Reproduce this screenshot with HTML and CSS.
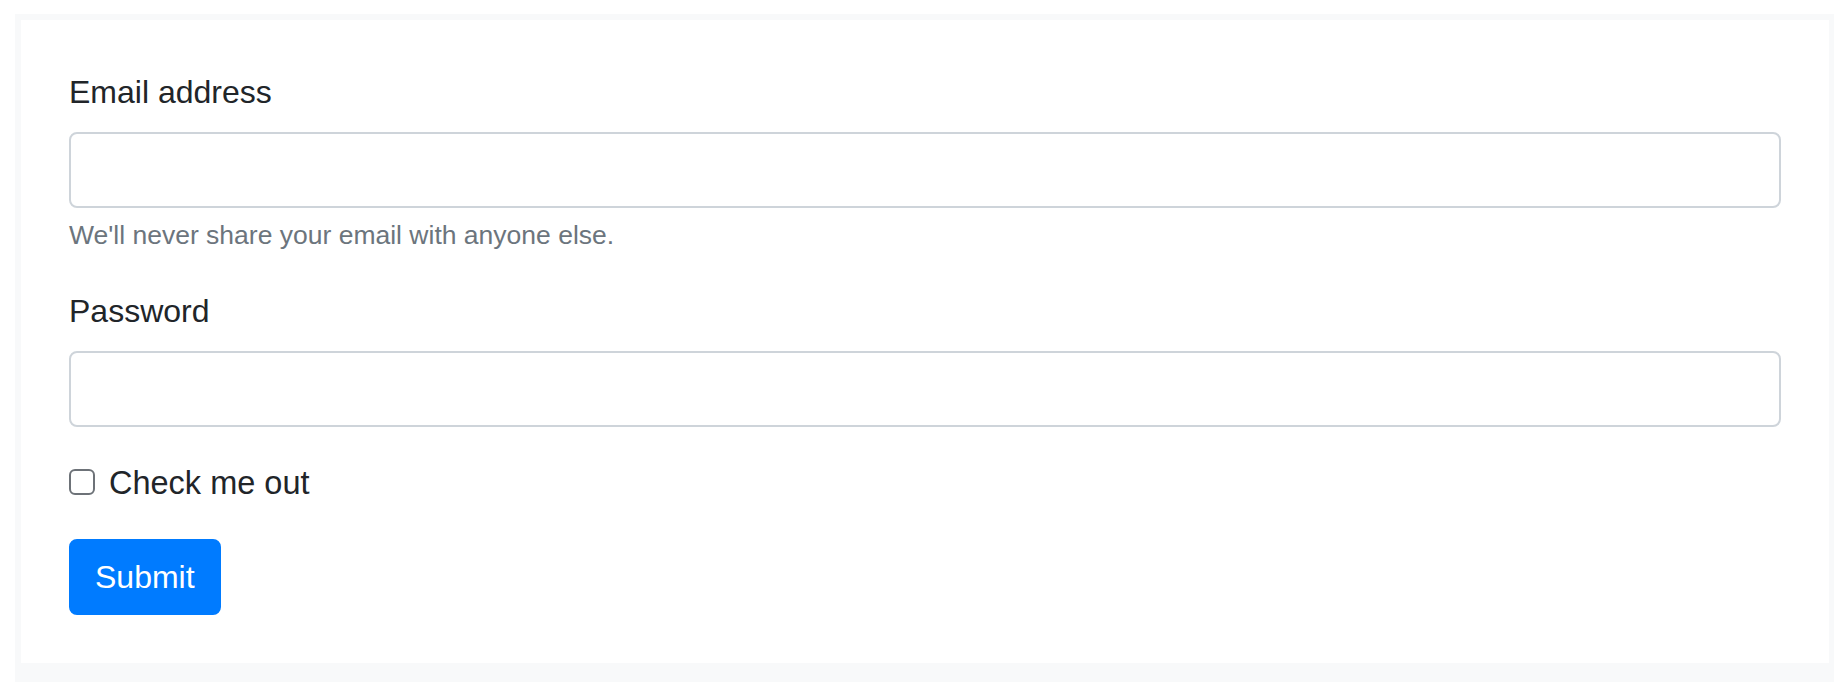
FILE: index.html
```html
<!DOCTYPE html>
<html lang="en">
<head>
    <meta charset="UTF-8">
    <meta name="viewport" content="width=device-width, initial-scale=1.0">
    <title>Form</title>
    <link rel="stylesheet" href="styles.css">
</head>
<body>
    <div class="frame">
        <form class="card" onsubmit="return false">
            <div class="form-group">
                <label for="email">Email address</label>
                <input type="email" id="email" class="form-control">
                <small class="form-text">We'll never share your email with anyone else.</small>
            </div>
            <div class="form-group">
                <label for="password">Password</label>
                <input type="password" id="password" class="form-control">
            </div>
            <div class="form-check">
                <input type="checkbox" id="check" class="form-check-input">
                <label for="check" class="form-check-label">Check me out</label>
            </div>
            <button type="submit" class="btn">Submit</button>
        </form>
    </div>
</body>
</html>
```

FILE: styles.css
```css
body { font-family: "Liberation Sans", Arial, sans-serif; font-size: 32px; line-height: 48px; color: #212529; background: #fff; margin: 14px 12px 0 15px; }
.frame { background: #f8f9fa; padding: 6px 5px 40px 6px; }
.card { background: #fff; padding: 48px; }

/* fields */
.form-group { margin-bottom: 32px; }
.form-group label { display: block; margin-bottom: 16px; }
.form-control { display: block; box-sizing: border-box; width: 100%; height: 76px; padding: 12px 24px; font: inherit; color: #495057; background: #fff; border: 2px solid #ced4da; border-radius: 8px; outline: none; }
.form-control:focus { border-color: #80bdff; }
.form-text { display: block; margin-top: 8px; font-size: 26.5px; line-height: 39px; color: #6c757d; }

/* checkbox */
.form-check { position: relative; padding-left: 40px; margin-bottom: 32px; font-size: 32.5px; }
.form-check-input { position: absolute; left: 0; top: 10px; margin: 0; width: 26px; height: 26px; box-sizing: border-box; -webkit-appearance: none; appearance: none; border: 2px solid #6d7278; border-radius: 6px; background: #fff; }
.form-check-input:checked { background: #007bff; border-color: #007bff; }

.btn { display: inline-block; font: inherit; line-height: 48px; color: #fff; background: #007bff; border: 2px solid #007bff; border-radius: 8px; padding: 12px 24px; cursor: pointer; }
.btn:hover { background: #0069d9; }
```
